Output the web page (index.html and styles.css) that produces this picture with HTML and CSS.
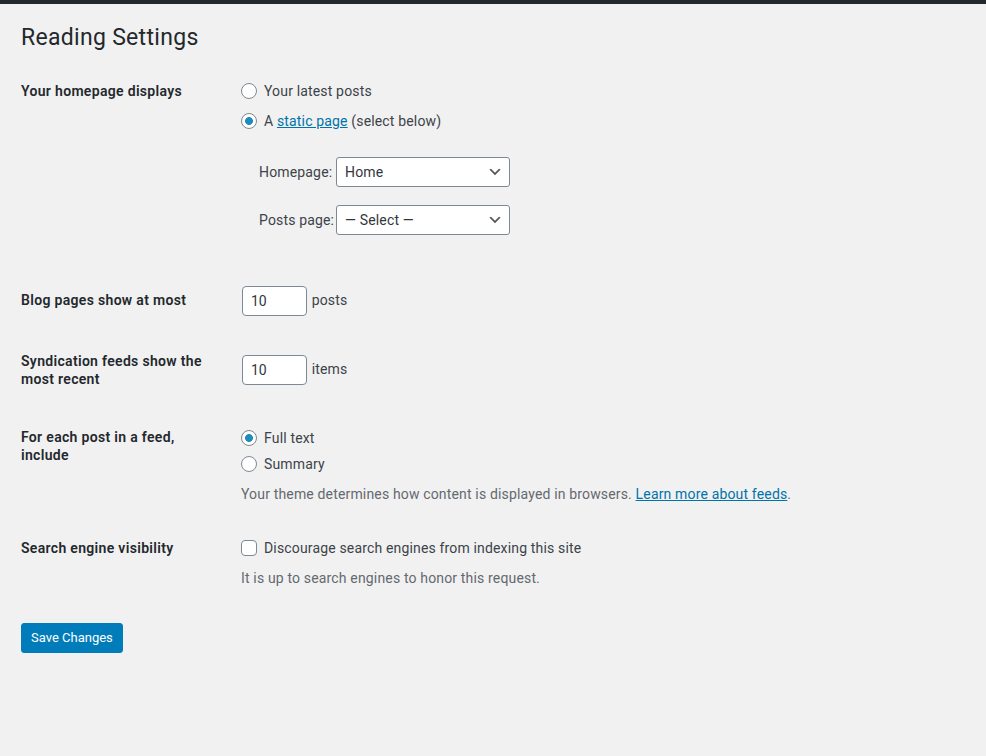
FILE: index.html
```html
<!DOCTYPE html>
<html lang="en">
<head>
<meta charset="utf-8">
<title>Reading Settings</title>
<link rel="stylesheet" href="styles.css">
</head>
<body>
<div class="adminbar"></div>
<div class="wrap">
  <h1 class="page-title">Reading Settings</h1>
  <form class="settings-form">
    <table class="form-table">
      <tr>
        <th>Your homepage displays</th>
        <td class="td-top">
          <fieldset class="options">
            <label class="choice first"><input type="radio" name="show_on_front" class="radio">Your latest posts</label>
            <label class="choice"><input type="radio" name="show_on_front" class="radio" checked>A <a href="#" class="link">static page</a> (select below)</label>
            <ul class="page-selects">
              <li class="page-select"><label class="sel-label">Homepage:</label><select class="select"><option>Home</option></select></li>
              <li class="page-select"><label class="sel-label">Posts page:</label><select class="select"><option>— Select —</option></select></li>
            </ul>
          </fieldset>
        </td>
      </tr>
      <tr class="row-blog">
        <th>Blog pages show at most</th>
        <td><input type="text" class="small-text" value="10"> posts</td>
      </tr>
      <tr>
        <th>Syndication feeds show the most recent</th>
        <td><input type="text" class="small-text" value="10"> items</td>
      </tr>
      <tr>
        <th>For each post in a feed, include</th>
        <td class="td-top">
          <fieldset class="options">
            <label class="choice feed-first"><input type="radio" name="rss" class="radio" checked>Full text</label>
            <label class="choice feed-second"><input type="radio" name="rss" class="radio">Summary</label>
            <p class="description">Your theme determines how content is displayed in browsers. <a href="#" class="link">Learn more about feeds</a>.</p>
          </fieldset>
        </td>
      </tr>
      <tr>
        <th>Search engine visibility</th>
        <td class="td-top">
          <fieldset class="options">
            <label class="choice first"><input type="checkbox" class="checkbox">Discourage search engines from indexing this site</label>
            <p class="description">It is up to search engines to honor this request.</p>
          </fieldset>
        </td>
      </tr>
    </table>
    <p class="submit"><button type="button" class="button-primary">Save Changes</button></p>
  </form>
</div>
</body>
</html>
```

FILE: styles.css
```css
* { box-sizing: border-box; }

body {
  margin: 0;
  background: #f1f1f1;
  color: #3c434a;
  font-family: Roboto, "Liberation Sans", sans-serif;
  font-size: 14px;
  line-height: 1.4;
  letter-spacing: 0.16px;
}

.adminbar {
  height: 4px;
  background: #23282d;
}

.wrap {
  margin: 10px 20px 0 21px;
}

.page-title {
  margin: 0;
  padding: 9px 0 4px;
  font-size: 23px;
  font-weight: 400;
  line-height: 1.3;
  letter-spacing: 0.3px;
  color: #23282d;
}

.settings-form { margin: 0; }

.form-table {
  margin-top: 5px;
  border-collapse: collapse;
  border-spacing: 0;
}

.form-table th {
  width: 200px;
  box-sizing: content-box;
  padding: 20px 10px 20px 0;
  text-align: left;
  vertical-align: top;
  font-weight: 600;
  line-height: 1.3;
  letter-spacing: 0.32px;
  color: #23282d;
}

.form-table td {
  padding: 15px 10px;
  line-height: 1.3;
  vertical-align: middle;
}

.form-table .row-blog td { padding-bottom: 16px; }

.form-table td.td-top { vertical-align: top; }

.options {
  margin: 0;
  padding: 0;
  border: 0;
  display: flex;
  flex-direction: column;
  align-items: flex-start;
}

.choice {
  display: flex;
  align-items: center;
  height: 20px;
  margin-top: 10px;
  white-space: pre;
}

.choice.first { margin-top: 4px; }
.feed-first { margin-top: 5px; }
.feed-second { margin-top: 6px; }

.radio, .checkbox {
  appearance: none;
  -webkit-appearance: none;
  width: 16px;
  height: 16px;
  margin: 0 7px 0 0;
  border: 1px solid #7e8993;
  background: #fff;
  flex: none;
}

.radio { border-radius: 50%; }
.checkbox { border-radius: 4px; }

.radio:checked {
  background: radial-gradient(circle, #1e8cbe 0 3.6px, #fff 4.2px);
}

.link {
  color: #0073aa;
  text-decoration: underline;
}

.page-selects {
  list-style: none;
  margin: 26px 0 21px 18px;
  padding: 0;
  display: flex;
  flex-direction: column;
  gap: 18px;
}

.page-select {
  display: grid;
  grid-template-columns: 77px 174px;
  align-items: center;
  height: 30px;
}

.sel-label { color: #3c434a; }

.select {
  appearance: none;
  -webkit-appearance: none;
  width: 174px;
  height: 30px;
  padding: 0 24px 0 8px;
  border: 1px solid #7e8993;
  border-radius: 3px;
  background: #fff url("data:image/svg+xml;charset=utf-8,%3Csvg xmlns='http://www.w3.org/2000/svg' width='20' height='20' viewBox='0 0 20 20'%3E%3Cpath d='M5 6l5 5 5-5 2 1-7 7-7-7 2-1z' fill='%23555'/%3E%3C/svg%3E") no-repeat right 6px top 55%;
  background-size: 16px 16px;
  font-family: inherit;
  font-size: 14px;
  letter-spacing: 0.16px;
  color: #32373c;
}

.small-text {
  width: 65px;
  height: 30px;
  padding: 0 8px;
  margin: 0 1px 0 1px;
  border: 1px solid #7e8993;
  border-radius: 4px;
  background: #fff;
  font-family: inherit;
  font-size: 14px;
  color: #32373c;
  vertical-align: middle;
}

.description {
  margin: 10px 0 0;
  line-height: 20px;
  color: #646970;
}

.submit {
  margin: 20px 0 0;
  padding: 0;
}

.button-primary {
  height: 30px;
  padding: 0 9px;
  border: 1px solid #007cba;
  border-radius: 3px;
  background: #007cba;
  color: #fff;
  font-family: inherit;
  font-size: 13px;
  letter-spacing: 0;
  line-height: 28px;
  cursor: pointer;
}
```
